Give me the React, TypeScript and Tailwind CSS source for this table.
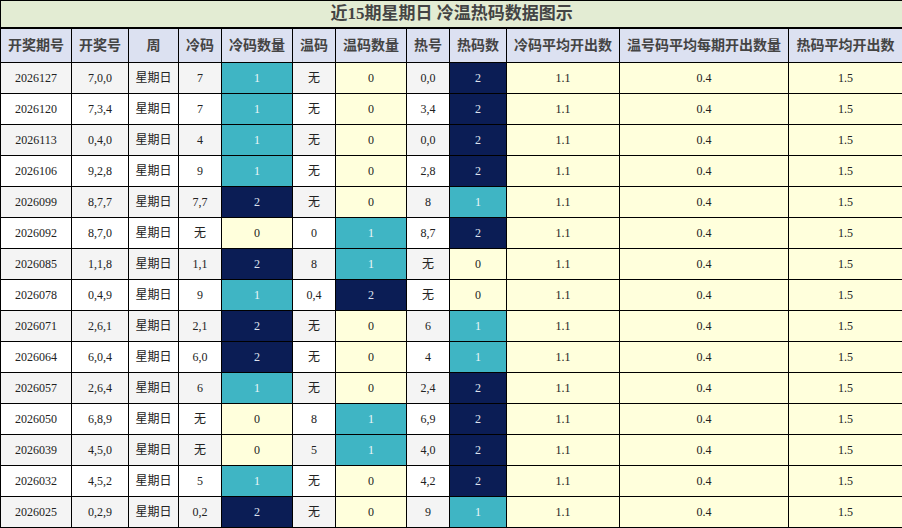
const rows: [string, string, string, number, string, number, string, number][] = [
  ['2026127', '7,0,0', '7', 1, '无', 0, '0,0', 2],
  ['2026120', '7,3,4', '7', 1, '无', 0, '3,4', 2],
  ['2026113', '0,4,0', '4', 1, '无', 0, '0,0', 2],
  ['2026106', '9,2,8', '9', 1, '无', 0, '2,8', 2],
  ['2026099', '8,7,7', '7,7', 2, '无', 0, '8', 1],
  ['2026092', '8,7,0', '无', 0, '0', 1, '8,7', 2],
  ['2026085', '1,1,8', '1,1', 2, '8', 1, '无', 0],
  ['2026078', '0,4,9', '9', 1, '0,4', 2, '无', 0],
  ['2026071', '2,6,1', '2,1', 2, '无', 0, '6', 1],
  ['2026064', '6,0,4', '6,0', 2, '无', 0, '4', 1],
  ['2026057', '2,6,4', '6', 1, '无', 0, '2,4', 2],
  ['2026050', '6,8,9', '无', 0, '8', 1, '6,9', 2],
  ['2026039', '4,5,0', '无', 0, '5', 1, '4,0', 2],
  ['2026032', '4,5,2', '5', 1, '无', 0, '4,2', 2],
  ['2026025', '0,2,9', '0,2', 2, '无', 0, '9', 1],
];

const headers = ['开奖期号', '开奖号', '周', '冷码', '冷码数量', '温码', '温码数量', '热号', '热码数', '冷码平均开出数', '温号码平均每期开出数量', '热码平均开出数'];
const widths = [71, 57, 50, 43, 71, 43, 71, 43, 57, 113, 169, 114];

function countCls(n: number) {
  if (n === 2) return 'bg-[#0b1d55] text-[#dde2ee]';
  if (n === 1) return 'bg-[#3fb5c4] text-[#eef8fa]';
  return 'bg-[#ffffdc] text-[#222]';
}

export default function App() {
  return (
    <div className="w-[902px] h-[528px] overflow-hidden bg-white font-['Liberation_Serif','Noto_Sans_CJK_SC',serif]">
      <table className="table-fixed border-collapse w-[902px] text-center">
        <colgroup>
          {widths.map((w, i) => (
            <col key={i} style={{ width: w }} />
          ))}
        </colgroup>
        <thead>
          <tr>
            <th colSpan={12} className="h-[27px] p-0 bg-[#e3ecd3] border border-black border-b-2 text-[17px] font-bold text-[#444] leading-none">
              近15期星期日 冷温热码数据图示
            </th>
          </tr>
          <tr>
            {headers.map((h) => (
              <th key={h} className="h-[35px] p-0 bg-[#dce1f1] border border-black text-[14px] font-bold text-[#444] whitespace-nowrap">
                {h}
              </th>
            ))}
          </tr>
        </thead>
        <tbody>
          {rows.map((r, i) => {
            const base = i % 2 === 0 ? 'bg-[#f4f4f4] text-[#222]' : 'bg-white text-[#222]';
            const td = 'h-[31px] p-0 border border-black text-[12px]';
            return (
              <tr key={r[0]}>
                <td className={`${td} ${base}`}>{r[0]}</td>
                <td className={`${td} ${base}`}>{r[1]}</td>
                <td className={`${td} ${base}`}>星期日</td>
                <td className={`${td} ${base}`}>{r[2]}</td>
                <td className={`${td} ${countCls(r[3])}`}>{r[3]}</td>
                <td className={`${td} ${base}`}>{r[4]}</td>
                <td className={`${td} ${countCls(r[5])}`}>{r[5]}</td>
                <td className={`${td} ${base}`}>{r[6]}</td>
                <td className={`${td} ${countCls(r[7])}`}>{r[7]}</td>
                <td className={`${td} bg-[#ffffdc] text-[#222]`}>1.1</td>
                <td className={`${td} bg-[#ffffdc] text-[#222]`}>0.4</td>
                <td className={`${td} bg-[#ffffdc] text-[#222]`}>1.5</td>
              </tr>
            );
          })}
        </tbody>
      </table>
    </div>
  );
}
